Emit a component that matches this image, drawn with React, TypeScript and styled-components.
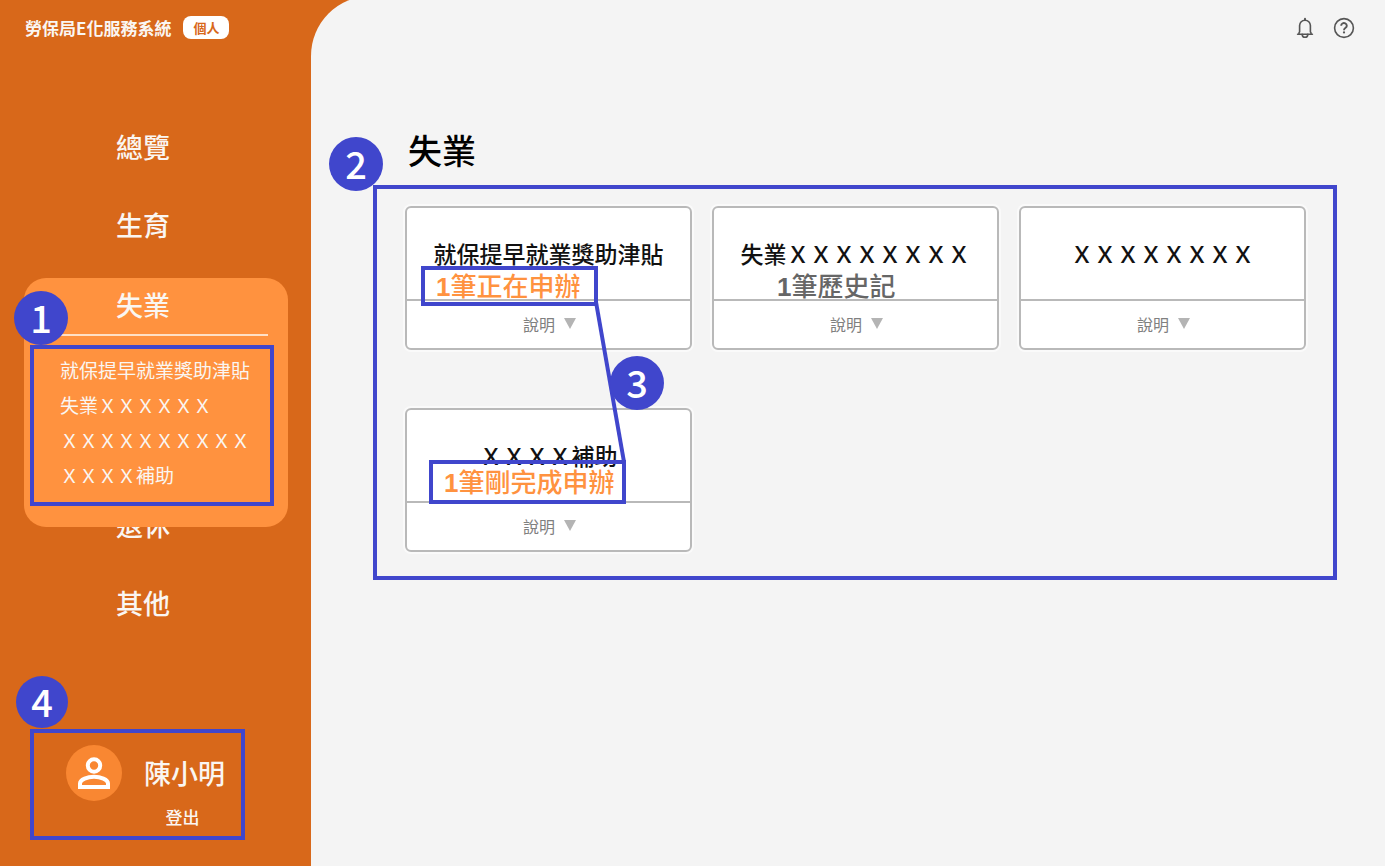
import React from 'react';
import styled, { createGlobalStyle } from 'styled-components';

const sans = '"Noto Sans CJK TC", "Liberation Sans", sans-serif';
const blue = '#4046cc';

const GlobalStyle = createGlobalStyle`
  *, *::before, *::after { box-sizing: border-box; }
  body { margin: 0; font-family: ${sans}; background: #d8681a; }
  h1, h2, p, ul { margin: 0; padding: 0; }
  ul { list-style: none; }
  a { color: inherit; text-decoration: none; }
  button { font-family: inherit; border: 0; padding: 0; background: none; cursor: pointer; }
`;

const Page = styled.div`
  display: grid;
  grid-template-columns: 311px minmax(0, 1fr);
  min-height: 100vh;
  overflow: hidden;
`;

const Sidebar = styled.aside`
  display: flex;
  flex-direction: column;
  color: #faf6f2;
`;

const Brand = styled.header`
  display: flex;
  align-items: center;
  gap: 12px;
  height: 54px;
  padding-left: 25px;
  font-size: 17px;
  font-weight: 700;
  white-space: nowrap;
`;

const RoleTag = styled.span`
  padding: 0 10px;
  border-radius: 8px;
  background: #fff;
  color: #d8681a;
  font-size: 13px;
  line-height: 23px;
`;

const Nav = styled.nav`
  padding-top: 55px;
`;

const NavLink = styled.a`
  display: flex;
  align-items: center;
  height: 78px;
  padding: 0 0 3px 116px;
  font-size: 27px;
  font-weight: 500;
`;

const ActiveGroup = styled.section`
  position: relative;
  z-index: 1;
  margin: 13px 23px -40px 24px;
  padding-bottom: 21px;
  border-radius: 22px;
  background: #ff923f;
`;

const ActiveLink = styled(NavLink)`
  height: 56px;
  padding-left: 92px;
`;

const Rule = styled.div`
  height: 2px;
  margin: 0 20px 9px;
  background: #ffe0c6;
`;

const Frame = styled.div`
  position: relative;
  border: 4px solid ${blue};
`;

const Marker = styled.span<{ $x: number; $y: number; $size?: number }>`
  position: absolute;
  left: ${(p) => p.$x}px;
  top: ${(p) => p.$y}px;
  display: flex;
  align-items: center;
  justify-content: center;
  width: ${(p) => p.$size ?? 54}px;
  height: ${(p) => p.$size ?? 54}px;
  padding-bottom: 3px;
  border-radius: 50%;
  background: ${blue};
  color: #fff;
  font-size: 38px;
  font-weight: 500;
  line-height: 1;
`;

const SubFrame = styled(Frame)`
  margin: 0 14px 0 6px;
  padding: 3px 0 10px 26px;
`;

const SubItem = styled.li`
  font-size: 19px;
  line-height: 35px;
  white-space: nowrap;
`;

const UserFrame = styled(Frame)`
  display: grid;
  grid-template-columns: 56px auto;
  justify-content: start;
  align-items: center;
  gap: 4px 22px;
  width: 215px;
  margin: auto 0 26px 30px;
  padding: 12px 0 7px 32px;
`;

const Avatar = styled.span`
  display: flex;
  align-items: center;
  justify-content: center;
  width: 56px;
  height: 56px;
  border-radius: 50%;
  background: #f98732;
`;

const UserName = styled.p`
  font-size: 27px;
  font-weight: 500;
  line-height: 40px;
`;

const Logout = styled.button`
  grid-column: 2;
  justify-self: center;
  padding-right: 4px;
  color: inherit;
  font-size: 17px;
  font-weight: 500;
  line-height: 24px;
`;

const Main = styled.main`
  margin-top: -4px;
  padding: 4px 48px 40px 62px;
  border-top-left-radius: 60px;
  background: #f4f4f4;
`;

const Tools = styled.header`
  display: flex;
  align-items: center;
  justify-content: flex-end;
  gap: 16px;
  height: 55px;
  margin-right: -19px;
`;

const IconButton = styled.button`
  display: flex;
  color: #555;
`;

const Title = styled.h1`
  padding: 75px 0 15px 35px;
  color: #000;
  font-size: 34px;
  font-weight: 500;
  line-height: 40px;
`;

const Board = styled(Frame)`
  padding: 17px 27px 24px 28px;
`;

const CardGrid = styled.div`
  display: grid;
  grid-template-columns: repeat(3, minmax(0, 1fr));
  gap: 58px 20px;
`;

const Card = styled.article`
  display: flex;
  flex-direction: column;
  height: 144px;
  border: 2px solid #b9b9b9;
  border-radius: 6px;
  background: #fff;
  box-shadow: 0 0 0 2px #fafafa;
`;

const CardBody = styled.div`
  height: 91px;
  padding-top: 33px;
`;

const CardTitle = styled.h2`
  color: #111;
  font-size: 23px;
  font-weight: 500;
  line-height: 24px;
  text-align: center;
  white-space: nowrap;
`;

const Status = styled.p<{ $tone: string; $framed: boolean; $indent: number; $raise: number; $tall: boolean }>`
  position: relative;
  width: max-content;
  margin: ${(p) => 1 - p.$raise}px 0 0 ${(p) => p.$indent}px;
  padding: 0 ${(p) => (p.$tall ? 8 : 14)}px 0 11px;
  border: 4px solid ${(p) => (p.$framed ? blue : 'transparent')};
  color: ${(p) => p.$tone};
  font-size: 26px;
  font-weight: 500;
  line-height: ${(p) => (p.$tall ? 34 : 30)}px;
  white-space: nowrap;
`;

const Count = styled.b`
  font-family: "Liberation Sans", sans-serif;
`;

const Explain = styled.button`
  display: flex;
  flex: 1;
  align-items: center;
  justify-content: center;
  gap: 9px;
  padding: 0 0 2px 2px;
  border-top: 2px solid #b9b9b9;
  color: #808080;
  font-size: 16px;
`;

const Connector = styled.svg`
  position: absolute;
  left: 216px;
  top: 110px;
`;

interface Benefit {
  title: string;
  status?: string;
  tone?: string;
  framed?: boolean;
  indent?: number;
  raise?: number;
}

const benefits: Benefit[] = [
  { title: '就保提早就業獎助津貼', status: '筆正在申辦', framed: true, indent: 14 },
  { title: '失業ＸＸＸＸＸＸＸＸ', status: '筆歷史記', tone: '#666', indent: 48 },
  { title: 'ＸＸＸＸＸＸＸＸ' },
  { title: 'ＸＸＸＸ補助', status: '筆剛完成申辦', framed: true, indent: 22, raise: 8 },
];

const subItems = ['就保提早就業獎助津貼', '失業ＸＸＸＸＸＸ', 'ＸＸＸＸＸＸＸＸＸＸ', 'ＸＸＸＸ補助'];

const BellIcon = () => (
  <svg width="22" height="24" viewBox="0 0 22 24" fill="none" stroke="currentColor" strokeWidth="1.6" strokeLinecap="round" strokeLinejoin="round">
    <path d="M11 2.8v1.2" strokeWidth="2" />
    <path d="M3.6 18.2h14.8M5 18v-1.2l.6-1V9.6a5.4 5.4 0 0 1 10.8 0v6.2l.6 1V18" />
    <path d="M8.2 18.4a2.8 2.9 0 0 0 5.6 0" />
  </svg>
);

const HelpIcon = () => (
  <svg width="24" height="24" viewBox="0 0 24 24" fill="none" stroke="currentColor" strokeWidth="1.6">
    <circle cx="12" cy="12" r="9.4" />
    <path d="M9.2 9.8a2.8 2.6 0 1 1 4.4 2c-1 .7-1.6 1.1-1.6 2.4" strokeWidth="1.9" />
    <circle cx="12" cy="16.4" r="1.1" fill="currentColor" stroke="none" />
  </svg>
);

const PersonIcon = () => (
  <svg width="34" height="34" viewBox="0 0 34 34" fill="none" stroke="#fff" strokeWidth="4">
    <circle cx="17" cy="9.5" r="6.2" />
    <path d="M3 31v-3.4c0-4.2 7.6-6.8 14-6.8s14 2.6 14 6.8V31z" />
  </svg>
);

export default function App() {
  return (
    <>
      <GlobalStyle />
      <Page>
        <Sidebar>
          <Brand>
            勞保局E化服務系統
            <RoleTag>個人</RoleTag>
          </Brand>
          <Nav>
            <NavLink href="#overview">總覽</NavLink>
            <NavLink href="#maternity">生育</NavLink>
            <ActiveGroup>
              <ActiveLink href="#unemployment">失業</ActiveLink>
              <Rule />
              <SubFrame>
                <ul>
                  {subItems.map((label) => (
                    <SubItem key={label}>
                      <a href="#benefit">{label}</a>
                    </SubItem>
                  ))}
                </ul>
                <Marker $x={-20} $y={-58}>1</Marker>
              </SubFrame>
            </ActiveGroup>
            <NavLink href="#retirement">退休</NavLink>
            <NavLink href="#other">其他</NavLink>
          </Nav>
          <UserFrame>
            <Avatar>
              <PersonIcon />
            </Avatar>
            <UserName>陳小明</UserName>
            <Logout type="button">登出</Logout>
            <Marker $x={-18} $y={-57} $size={52}>4</Marker>
          </UserFrame>
        </Sidebar>
        <Main>
          <Tools>
            <IconButton type="button" aria-label="通知">
              <BellIcon />
            </IconButton>
            <IconButton type="button" aria-label="說明">
              <HelpIcon />
            </IconButton>
          </Tools>
          <Title>失業</Title>
          <Board>
            <CardGrid>
              {benefits.map((b) => (
                <Card key={b.title}>
                  <CardBody>
                    <CardTitle>{b.title}</CardTitle>
                    {b.status && (
                      <Status
                        $tone={b.tone ?? '#ff923f'}
                        $framed={!!b.framed}
                        $indent={b.indent ?? 0}
                        $raise={b.raise ?? 0}
                        $tall={!!b.raise}
                      >
                        <Count>1</Count>
                        {b.status}
                      </Status>
                    )}
                  </CardBody>
                  <Explain type="button">
                    說明
                    <svg width="12" height="11" viewBox="0 0 12 11" fill="#b4b4b4">
                      <path d="M0 0h12L6 11z" />
                    </svg>
                  </Explain>
                </Card>
              ))}
            </CardGrid>
            <Connector width="40" height="168" viewBox="0 0 40 168" aria-hidden="true">
              <path d="M3 3L31 163" stroke={blue} strokeWidth="4" />
            </Connector>
            <Marker $x={233} $y={167}>3</Marker>
            <Marker $x={-48} $y={-52}>2</Marker>
          </Board>
        </Main>
      </Page>
    </>
  );
}
